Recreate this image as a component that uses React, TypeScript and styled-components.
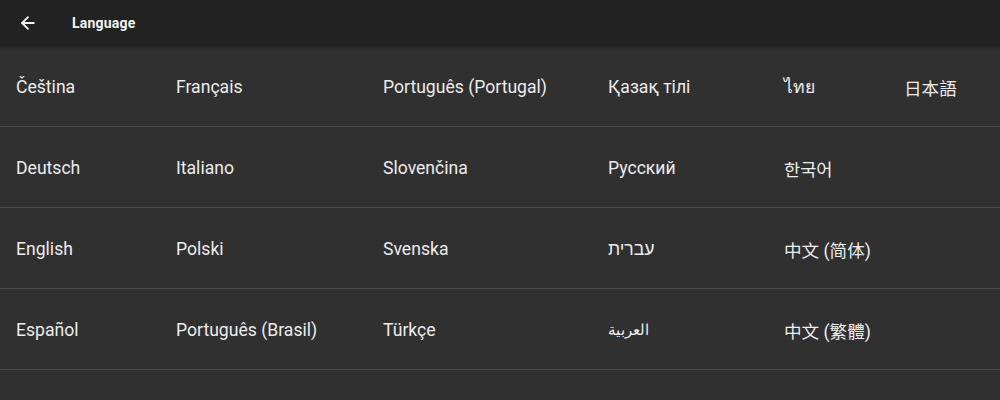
import styled, { createGlobalStyle } from 'styled-components';
import { ArrowLeft } from 'lucide-react';

const GlobalStyle = createGlobalStyle`
  html, body {
    margin: 0;
    padding: 0;
    background: #303030;
    font-family: Roboto, "Noto Sans", "Noto Sans CJK SC", sans-serif;
  }
`;

const Page = styled.div`
  width: 1000px;
  height: 400px;
  overflow: hidden;
  background: #303030;
  color: #ececec;
`;

const Toolbar = styled.header`
  height: 46px;
  background: #222222;
  display: flex;
  align-items: center;
  box-shadow: 0 1px 3px rgba(0, 0, 0, 0.35);
  position: relative;
  z-index: 1;
`;

const BackButton = styled.button`
  width: 56px;
  height: 46px;
  padding: 0 0 0 18px;
  border: none;
  background: transparent;
  color: #f2f2f2;
  display: flex;
  align-items: center;
  cursor: pointer;
`;

const Title = styled.h1`
  margin: 0 0 0 16px;
  font-size: 14px;
  font-weight: 700;
  color: #f2f2f2;
  letter-spacing: 0.2px;
`;

const LanguageList = styled.ul`
  margin: 0;
  padding: 0;
  list-style: none;
`;

const Row = styled.li`
  height: 80px;
  box-sizing: border-box;
  padding-top: 2px;
  height: 81px;
  border-bottom: 1px solid #494949;
  display: grid;
  grid-template-columns: 176px 207px 225px 176px 120px 1fr;
  align-items: center;
`;

const Lang = styled.span<{ $first?: boolean; $small?: boolean }>`
  padding-left: ${(p) => (p.$first ? '16px' : '0')};
  font-size: ${(p) => (p.$small ? '14.5px' : '17.6px')};
  color: #ececec;
  white-space: nowrap;
`;

const columns: string[][] = [
  ['Čeština', 'Deutsch', 'English', 'Español'],
  ['Français', 'Italiano', 'Polski', 'Português (Brasil)'],
  ['Português (Portugal)', 'Slovenčina', 'Svenska', 'Türkçe'],
  ['Қазақ тілі', 'Русский', 'עברית', 'العربية'],
  ['ไทย', '한국어', '中文 (简体)', '中文 (繁體)'],
  ['日本語'],
];

export default function App() {
  const rows = [0, 1, 2, 3, 4];
  return (
    <Page>
      <GlobalStyle />
      <Toolbar>
        <BackButton aria-label="Back">
          <ArrowLeft size={20} strokeWidth={2.2} />
        </BackButton>
        <Title>Language</Title>
      </Toolbar>
      <LanguageList>
        {rows.map((r) => (
          <Row key={r}>
            {columns.map((col, c) => (
              <Lang key={c} $first={c === 0} $small={col[r] === 'العربية'}>
                {col[r] ?? ''}
              </Lang>
            ))}
          </Row>
        ))}
      </LanguageList>
    </Page>
  );
}
